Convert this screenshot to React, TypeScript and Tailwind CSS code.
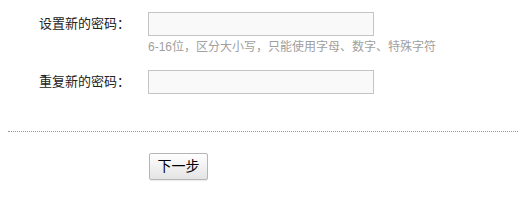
export default function App() {
  const font = { fontFamily: '"Liberation Sans", "Noto Sans CJK SC", sans-serif' }
  return (
    <div className="w-[518px] h-[207px] bg-white pt-[12px] text-[#222]" style={font}>
      {/* 设置新的密码 */}
      <div className="flex items-start">
        <label className="w-[130px] h-[24px] text-right text-[13px] leading-[24px]">设置新的密码：</label>
        <div className="ml-[18px]">
          <input type="password" className="block w-[226px] h-[24px] border border-[#c4c4c4] bg-[#f9f9f9] outline-none" />
          <p className="mt-[3px] text-[12px] leading-[16px] text-[#a0a0a0]">6-16位，区分大小写，只能使用字母、数字、特殊字符</p>
        </div>
      </div>

      {/* 重复新的密码 */}
      <div className="flex items-start mt-[15px]">
        <label className="w-[130px] h-[24px] text-right text-[13px] leading-[24px]">重复新的密码：</label>
        <div className="ml-[18px]">
          <input type="password" className="block w-[226px] h-[24px] border border-[#c4c4c4] bg-[#f9f9f9] outline-none" />
        </div>
      </div>

      <div className="ml-[8px] mt-[37px] border-t border-dotted border-[#999]" />

      <div className="ml-[149px] mt-[21px]">
        <button className="w-[59px] h-[27px] rounded-[2px] border border-[#b5b5b5] bg-gradient-to-b from-white to-[#e4e4e4] text-[14px] text-black shadow-[0_1px_1px_rgba(0,0,0,0.08)]">
          下一步
        </button>
      </div>
    </div>
  )
}
